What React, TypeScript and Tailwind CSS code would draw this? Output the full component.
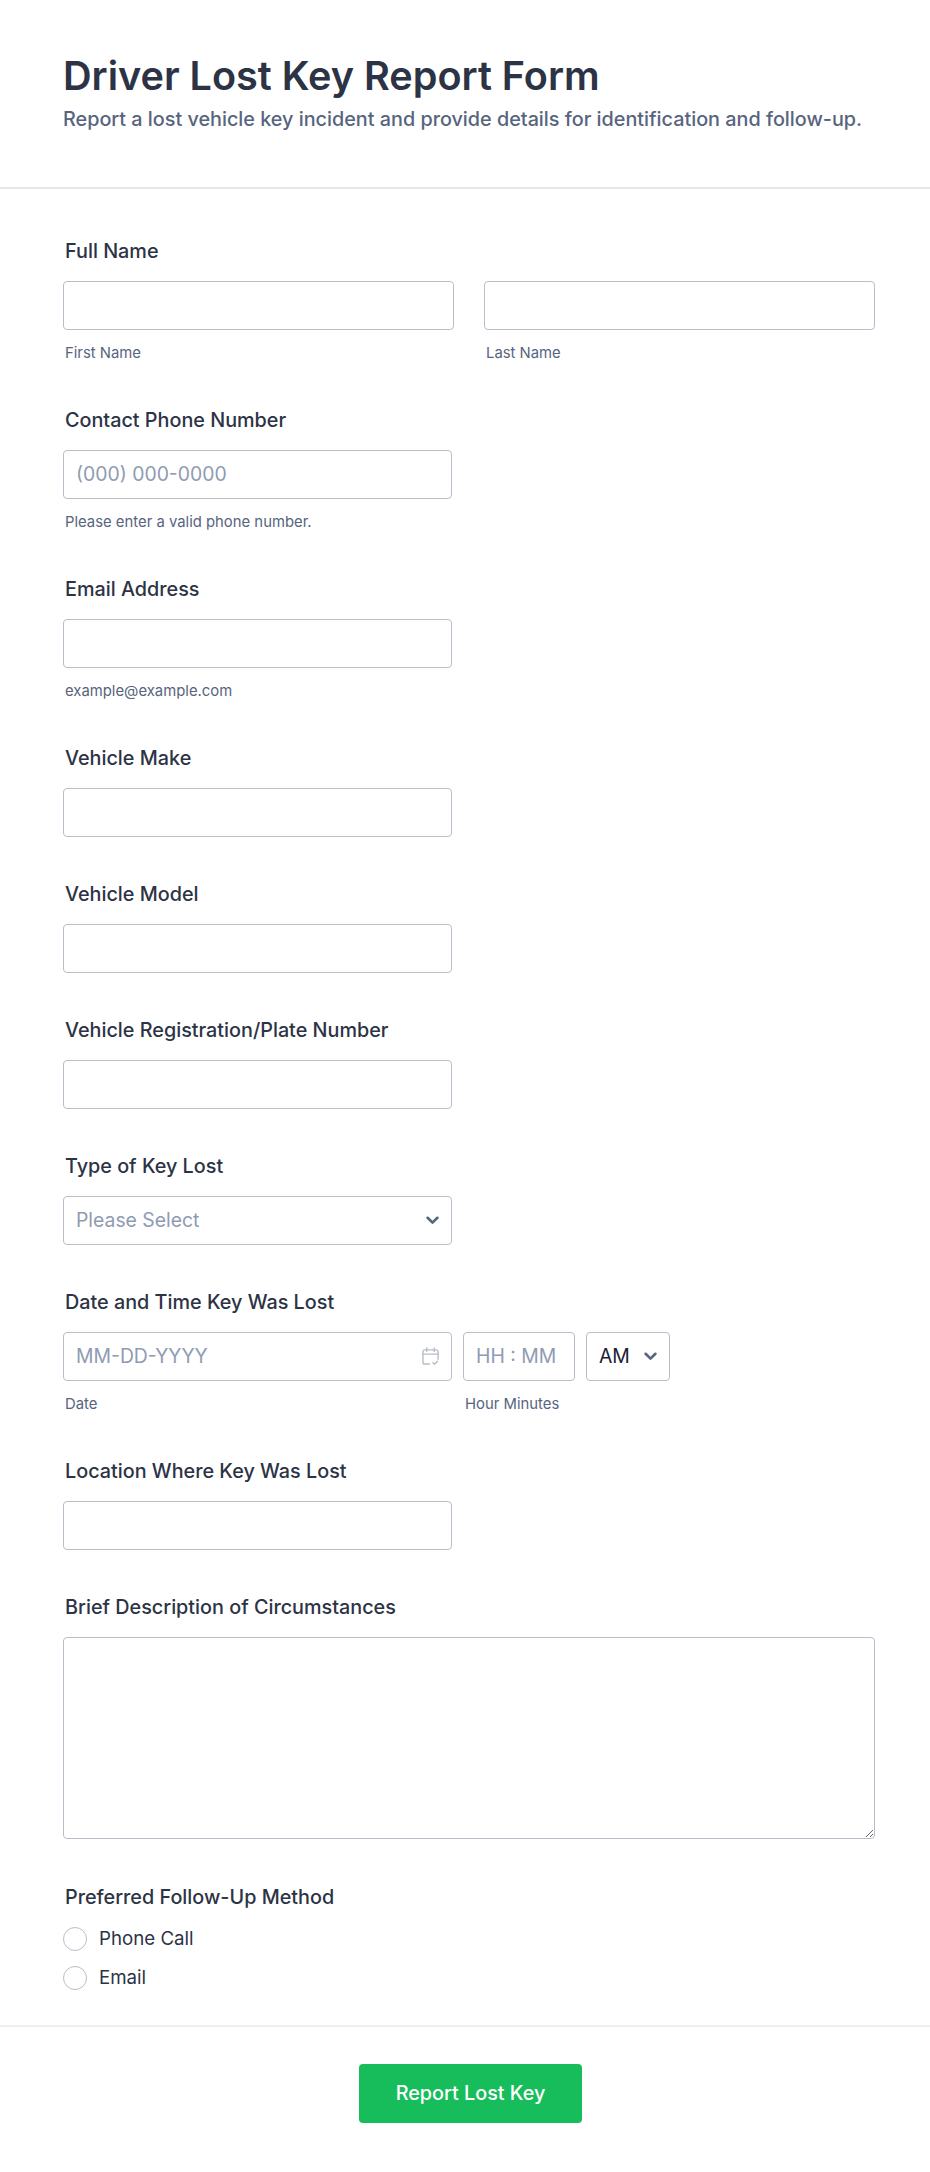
import type { ReactNode } from 'react';

function Label({ children }: { children: ReactNode }) {
  return <label className="block ml-0.5 text-[19.8px] leading-[28px] font-medium text-[#2c3345]">{children}</label>;
}

function Sub({ children }: { children: ReactNode }) {
  return <div className="mt-[13px] ml-0.5 text-[14.85px] leading-[20px] text-[#57647e]">{children}</div>;
}

const box = 'h-[49px] rounded-[4px] border border-[#b8bdc9] bg-white';

function TextField({ label, placeholder, sub }: { label: string; placeholder?: string; sub?: string }) {
  return (
    <div className="mb-[43px]">
      <Label>{label}</Label>
      <div className={`mt-[16px] w-[389px] px-[12px] flex items-center text-[19.36px] text-[#8f9bb3] ${box}`}>{placeholder}</div>
      {sub && <Sub>{sub}</Sub>}
    </div>
  );
}

function Chevron({ className }: { className?: string }) {
  return (
    <svg viewBox="0 0 12 8" className={className} fill="none" stroke="#57647e" strokeWidth="2.4" strokeLinecap="round" strokeLinejoin="round">
      <path d="M1.5 1.5 6 6l4.5-4.5" />
    </svg>
  );
}

export default function App() {
  return (
    <div className="w-[930px] min-h-[2172px] bg-white font-['Inter',sans-serif]">
      {/* Header */}
      <div className="h-[189px] border-b-2 border-[#e6e7ec] px-[63px] pt-[52px]">
        <h1 className="text-[39.6px] leading-[48px] font-semibold text-[#2c3345]">Driver Lost Key Report Form</h1>
        <p className="mt-[5px] text-[19.8px] leading-[28px] font-medium text-[#57647e] whitespace-nowrap">
          Report a lost vehicle key incident and provide details for identification and follow-up.
        </p>
      </div>

      <div className="pl-[63px] pr-[55px] pt-[48px]">
        {/* Full name */}
        <div className="mb-[43px]">
          <Label>Full Name</Label>
          <div className="mt-[16px] flex gap-[30px]">
            <div className="w-[391px]">
              <div className={box} />
              <Sub>First Name</Sub>
            </div>
            <div className="w-[391px]">
              <div className={box} />
              <Sub>Last Name</Sub>
            </div>
          </div>
        </div>

        <TextField label="Contact Phone Number" placeholder="(000) 000-0000" sub="Please enter a valid phone number." />
        <TextField label="Email Address" sub="example@example.com" />
        <TextField label="Vehicle Make" />
        <TextField label="Vehicle Model" />
        <TextField label="Vehicle Registration/Plate Number" />

        {/* Type of key */}
        <div className="mb-[43px]">
          <Label>Type of Key Lost</Label>
          <div className={`mt-[16px] w-[389px] px-[12px] flex items-center justify-between text-[19.36px] text-[#8f9bb3] ${box}`}>
            Please Select
            <Chevron className="w-[13px] h-[9px]" />
          </div>
        </div>

        {/* Date and time */}
        <div className="mb-[43px]">
          <Label>Date and Time Key Was Lost</Label>
          <div className="mt-[16px] flex gap-[11px]">
            <div className="w-[389px]">
              <div className={`px-[12px] flex items-center justify-between text-[19.36px] text-[#8f9bb3] ${box}`}>
                MM-DD-YYYY
                <svg viewBox="0 0 18 20" className="w-[17px] h-[19px]" fill="none" stroke="#b8bdc9" strokeWidth="1.5" strokeLinecap="round" strokeLinejoin="round">
                  <path d="M8 18H3a2 2 0 0 1-2-2V5a2 2 0 0 1 2-2h12a2 2 0 0 1 2 2v8" />
                  <path d="M1 7.5h16M5 1v3.5M13 1v3.5" />
                  <path d="m11.5 16.5 1.8 1.8 3.2-3.3" />
                </svg>
              </div>
              <Sub>Date</Sub>
            </div>
            <div className="w-[112px]">
              <div className={`px-[12px] flex items-center text-[19.36px] whitespace-nowrap text-[#8f9bb3] ${box}`}>HH : MM</div>
              <Sub>Hour Minutes</Sub>
            </div>
            <div className={`w-[84px] px-[12px] flex items-center justify-between text-[19.36px] text-[#1a2236] ${box}`}>
              AM
              <Chevron className="w-[13px] h-[9px]" />
            </div>
          </div>
        </div>

        <TextField label="Location Where Key Was Lost" />

        {/* Description */}
        <div className="mb-[44px]">
          <Label>Brief Description of Circumstances</Label>
          <textarea className="block mt-[16px] w-[812px] h-[202px] rounded-[4px] border border-[#b8bdc9] bg-white" />
        </div>

        {/* Follow up */}
        <Label>Preferred Follow-Up Method</Label>
        <div className="mt-[16px] flex flex-col gap-[15px]">
          {['Phone Call', 'Email'].map((opt) => (
            <div key={opt} className="flex items-center gap-[12px] text-[18.7px] leading-[24px] text-[#2c3345]">
              <span className="w-[24px] h-[24px] rounded-full border border-[#b8bdc9] bg-white" />
              {opt}
            </div>
          ))}
        </div>
      </div>

      {/* Footer */}
      <div className="mt-[35px] border-t-2 border-[#eeeff3] pt-[37px] pl-[11px] flex justify-center">
        <button type="button" className="w-[223px] h-[59px] rounded-[4px] bg-[#18bd5b] text-white text-[19.8px] font-medium">
          Report Lost Key
        </button>
      </div>
    </div>
  );
}
